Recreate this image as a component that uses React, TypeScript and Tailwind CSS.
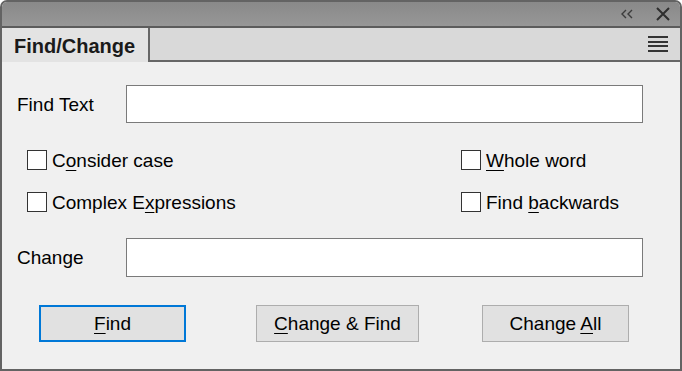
import React from "react";

const font = { fontFamily: '"Liberation Sans", Arial, sans-serif' };

function U({ children }: { children: React.ReactNode }) {
  return <span className="underline decoration-1 underline-offset-[3px]">{children}</span>;
}

function Check({ children }: { children: React.ReactNode }) {
  return (
    <div className="flex items-center h-[20px]">
      <div className="w-[20px] h-[20px] bg-white border border-[#333333]" />
      <span className="ml-[5px] text-[19px] leading-none text-black">{children}</span>
    </div>
  );
}

export default function App() {
  return (
    <div
      className="w-[682px] h-[371px] bg-[#f0f0f0] border-2 border-[#636363] rounded-t-[7px] overflow-hidden flex flex-col text-black"
      style={font}
    >
      {/* Title bar */}
      <div className="h-[24px] bg-gradient-to-b from-[#898989] to-[#979797] flex items-center justify-end pr-[10px] shrink-0">
        <svg width="14" height="12" viewBox="0 0 14 12" className="mr-[22px]">
          <path d="M6 2 L2 6 L6 10 M12 2 L8 6 L12 10" stroke="#3c3c3c" strokeWidth="1.4" fill="none" />
        </svg>
        <svg width="14" height="14" viewBox="0 0 14 14">
          <path d="M1 1 L13 13 M13 1 L1 13" stroke="#2e2e2e" strokeWidth="2" fill="none" />
        </svg>
      </div>
      <div className="h-[2px] bg-[#5c5c5c] shrink-0" />
      {/* Tab row */}
      <div className="h-[34px] flex shrink-0">
        <div className="w-[146px] bg-[#e3e3e3] flex items-center pl-[12px] pt-[2px]">
          <span className="text-[20px] font-bold text-[#1a1a1a] leading-none">Find/Change</span>
        </div>
        <div className="flex-1 bg-[#d9d9d9] border-l-2 border-b-2 border-[#666666] flex items-center justify-end pr-[12px]">
          <div className="flex flex-col gap-[2.5px]">
            <div className="w-[20px] h-[2px] bg-[#333333]" />
            <div className="w-[20px] h-[2px] bg-[#333333]" />
            <div className="w-[20px] h-[2px] bg-[#333333]" />
            <div className="w-[20px] h-[2px] bg-[#333333]" />
          </div>
        </div>
      </div>
      {/* Content */}
      <div className="flex-1 relative">
        <div className="flex items-center mt-[23px] pl-[15px]">
          <span className="w-[109px] text-[19px] leading-none">Find Text</span>
          <div className="w-[517px] h-[38px] bg-white border border-[#7a7a7a]" />
        </div>
        <div className="flex mt-[27px] pl-[25px]">
          <div className="w-[434px] flex flex-col gap-[22px]">
            <Check>C<U>o</U>nsider case</Check>
            <Check>Complex E<U>x</U>pressions</Check>
          </div>
          <div className="flex flex-col gap-[22px]">
            <Check><U>W</U>hole word</Check>
            <Check>Find <U>b</U>ackwards</Check>
          </div>
        </div>
        <div className="flex items-center mt-[26px] pl-[15px]">
          <span className="w-[109px] text-[19px] leading-none">Change</span>
          <div className="w-[517px] h-[39px] bg-white border border-[#7a7a7a]" />
        </div>
        <div className="flex mt-[28px] pl-[37px]">
          <button className="w-[147px] h-[37px] bg-[#e1e1e1] border-2 border-[#0078d7] text-[19px] leading-none flex items-center justify-center">
            <span><U>F</U>ind</span>
          </button>
          <button className="ml-[70px] w-[163px] h-[37px] bg-[#e1e1e1] border border-[#adadad] text-[19px] leading-none flex items-center justify-center">
            <span><U>C</U>hange &amp; Find</span>
          </button>
          <button className="ml-[63px] w-[147px] h-[37px] bg-[#e1e1e1] border border-[#adadad] text-[19px] leading-none flex items-center justify-center">
            <span>Change <U>A</U>ll</span>
          </button>
        </div>
      </div>
    </div>
  );
}
